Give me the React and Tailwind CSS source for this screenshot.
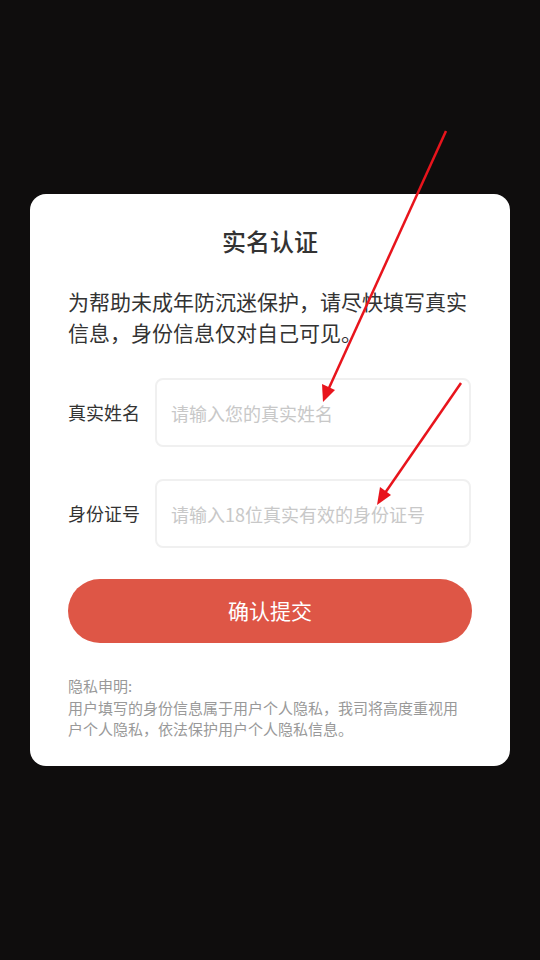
import React from 'react';

const font = { fontFamily: '"Noto Sans CJK SC", "Noto Sans", sans-serif' };

// One labelled input row
const Field = ({ label, placeholder, className = '' }) => (
    <div className={`flex items-center ${className}`}>
        <label className="w-[87px] shrink-0 text-[18px] text-[#333]">{label}</label>
        <input
            type="text"
            placeholder={placeholder}
            className="h-[69px] w-[316px] rounded-[8px] border-2 border-[#f0f0f0] bg-white px-[14px] text-[18px] text-[#333] placeholder-[#c8c8c8] outline-none"
        />
    </div>
);

// Red annotation arrows drawn over the screenshot
const Arrows = () => (
    <svg className="pointer-events-none absolute inset-0" width="540" height="960" viewBox="0 0 540 960">
        <line x1="446" y1="131" x2="329" y2="388" stroke="#e8141c" strokeWidth="2.5" />
        <polygon points="323,402 322,384 335,390" fill="#e8141c" />
        <line x1="461" y1="383" x2="385" y2="493" stroke="#e8141c" strokeWidth="2.5" />
        <polygon points="377,505 380,487 391,495" fill="#e8141c" />
    </svg>
);

export default function App() {
    return (
        <div className="relative h-[960px] w-[540px] overflow-hidden bg-[#0f0d0d]" style={font}>
            <div className="ml-[30px] mt-[194px] w-[480px] rounded-[16px] bg-white px-[38px] pb-[26px] pt-[31px]">
                {/* Title */}
                <h1 className="text-center text-[24px] font-medium leading-[32px] text-[#333]">实名认证</h1>

                {/* Intro */}
                <p className="mt-[29px] text-[21px] leading-[31px] text-[#333]">
                    为帮助未成年防沉迷保护，请尽快填写真实信息，身份信息仅对自己可见。
                </p>

                {/* Form */}
                <Field className="mt-[30px]" label="真实姓名" placeholder="请输入您的真实姓名" />
                <Field className="mt-[32px]" label="身份证号" placeholder="请输入18位真实有效的身份证号" />

                <button
                    type="button"
                    className="mt-[31px] h-[64px] w-full rounded-full bg-[#de5646] text-[21px] text-white"
                >
                    确认提交
                </button>

                {/* Privacy note */}
                <div className="mt-[32px] text-[15px] leading-[21.5px] text-[#999]">
                    <p>隐私申明:</p>
                    <p>用户填写的身份信息属于用户个人隐私，我司将高度重视用户个人隐私，依法保护用户个人隐私信息。</p>
                </div>
            </div>
            <Arrows />
        </div>
    );
}
